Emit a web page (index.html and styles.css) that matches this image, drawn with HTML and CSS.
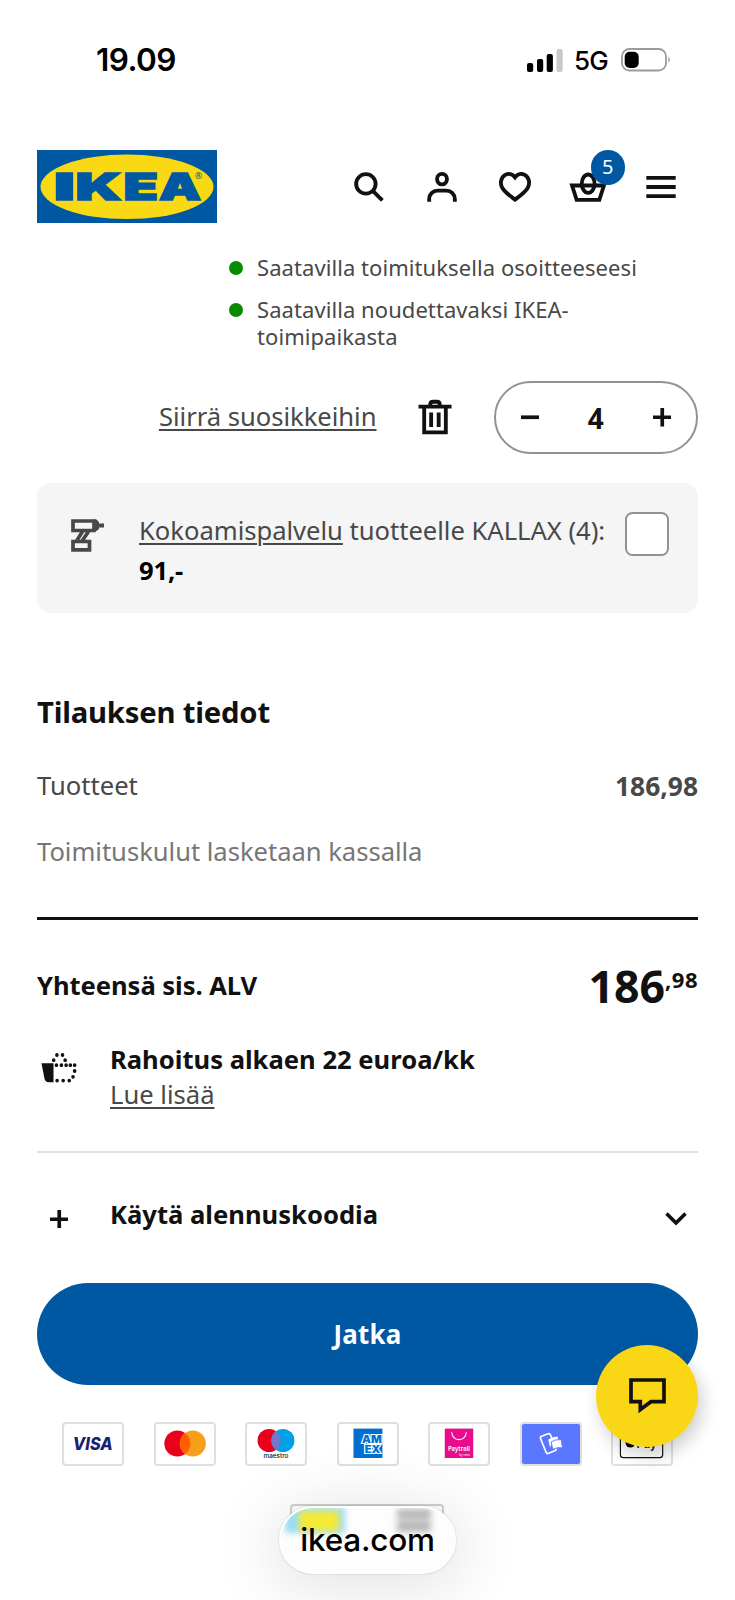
FILE: index.html
```html
<!DOCTYPE html>
<html lang="fi">
<head>
<meta charset="utf-8">
<title>IKEA – Ostoskori</title>
<link rel="stylesheet" href="styles.css">
</head>
<body>
<div class="screen">
  <div class="status">
    <span class="clock">19.09</span>
    <div class="status-right">
      <svg class="signal" viewBox="0 0 36 23"><rect x="0" y="14" width="6.2" height="9" rx="2"/><rect x="10" y="10" width="6.2" height="13" rx="2"/><rect x="19.700" y="5" width="6.200" height="18" rx="2"/><rect x="29.500" y="0" width="6.200" height="23" rx="2" fill="#c9c9c9"/></svg>
      <span class="network">5G</span>
      <svg class="battery" viewBox="0 0 50 24"><rect x="1" y="1" width="44" height="21.500" rx="7.500" fill="none" stroke="#9b9b9b" stroke-width="1.800"/><rect x="3.700" y="3.700" width="14" height="16.200" rx="5"/><path d="M47.500 8.500q2.500 3.200 0 6.400z" fill="#888"/></svg>
    </div>
  </div>

  <header class="header">
    <svg class="logo" viewBox="0 0 180 73">
      <rect width="180" height="73" fill="#0058a3"/>
      <ellipse cx="90" cy="36.800" rx="86.500" ry="32.300" fill="#f9d914"/>
      <g class="logo-letters">
        <text x="17" y="49.600" textLength="21" lengthAdjust="spacingAndGlyphs">I</text>
        <text x="38.500" y="49.600" textLength="46" lengthAdjust="spacingAndGlyphs">K</text>
        <text x="86.500" y="49.600" textLength="34.500" lengthAdjust="spacingAndGlyphs">E</text>
        <text x="122" y="49.600" textLength="42" lengthAdjust="spacingAndGlyphs">A</text>
      </g>
      <text class="logo-mark" x="157.800" y="28.600">®</text>
    </svg>
    <nav class="nav">
      <svg class="icon" viewBox="0 0 24 24"><circle cx="10.300" cy="10.300" r="5.300"/><path d="M14.200 14.200l5.100 5.100"/></svg>
      <svg class="icon" viewBox="0 0 24 24"><ellipse cx="12" cy="7.700" rx="2.700" ry="2.900"/><path d="M5 20v-1.500A4.500 4.500 0 0 1 9.500 14h5a4.500 4.500 0 0 1 4.500 4.500V20"/></svg>
      <svg class="icon" viewBox="0 0 24 24"><path d="M12 6.700C10.600 4.800 8.500 4.400 6.700 5.400 4.100 6.900 3.700 10.100 5.100 12.500 6.600 15 9.300 16.800 12 18.900 14.700 16.800 17.400 15 18.900 12.500 20.300 10.100 19.900 6.900 17.300 5.400 15.500 4.400 13.400 4.800 12 6.700z"/></svg>
      <div class="basket">
        <svg class="icon" viewBox="0 0 24 24"><path d="M3.300 11.200h17.400L18.200 19H5.800z"/><ellipse cx="12.100" cy="10.200" rx="3.500" ry="5"/></svg>
        <span class="badge">5</span>
      </div>
      <svg class="icon" viewBox="0 0 24 24"><path d="M4 7h16M4 12h16M4 17h16"/></svg>
    </nav>
  </header>

  <main class="content">
    <ul class="availability">
      <li>Saatavilla toimituksella osoitteeseesi</li>
      <li>Saatavilla noudettavaksi IKEA-<br>toimipaikasta</li>
    </ul>

    <div class="item-actions">
      <a class="link">Siirrä suosikkeihin</a>
      <svg class="icon trash" viewBox="0 0 24 24"><path d="M3 6.300h18M6.100 6.300v14.100h11.800V6.300M9.400 6.300V5.200q0-1.500 1.500-1.500h2.200q1.500 0 1.500 1.500v1.100M9.900 9.500v8M14 9.500v8"/></svg>
      <div class="stepper">
        <svg class="sign" viewBox="0 0 18 18"><path d="M0 9h18"/></svg>
        <span>4</span>
        <svg class="sign" viewBox="0 0 18 18"><path d="M0 9h18M9 0v18"/></svg>
      </div>
    </div>

    <section class="service">
      <svg class="drill" viewBox="0 0 34 33"><path d="M2 2h21v9.500H2zM2 22.500h16.500v8.300H2zM11.500 12.500L5.500 22M17.500 12.500L11 22"/><path class="solid" d="M23 0.500h2.500l2.500 2.500v1.500h5v4h-5V10l-2.500 2H23z"/></svg>
      <div class="service-text"><a class="link">Kokoamispalvelu</a> tuotteelle KALLAX (4):<br><strong>91,-</strong></div>
      <span class="checkbox"></span>
    </section>

    <h2 class="title">Tilauksen tiedot</h2>
    <div class="row products"><span>Tuotteet</span><strong>186,98</strong></div>
    <p class="shipping">Toimituskulut lasketaan kassalla</p>
    <div class="rule-strong"></div>
    <div class="row total"><strong>Yhteensä sis. ALV</strong><span class="price">186<sup>,98</sup></span></div>

    <div class="financing">
      <svg class="finance-icon" viewBox="0 0 38 30" preserveAspectRatio="none"><path d="M0.500 10.200h12.700v19H8.500q-4.300 0-5-4.500z"/><g class="dots"><path d="M16.800 2h.01M22.700 2h.01M13.400 7.200h.01M25.500 7.200h.01M16.300 12.200h.01M21.500 12.200h.01M26.500 12.200h.01M31 12.200h.01M35.500 12.200h.01M35.500 18h.01M33.800 23.800h.01M29.800 27.600h.01M17 27.600h.01M23.400 27.600h.01"/></g></svg>
      <div><strong>Rahoitus alkaen 22 euroa/kk</strong><br><a class="link">Lue lisää</a></div>
    </div>
    <div class="rule-light"></div>
    <div class="discount">
      <svg class="sign" viewBox="0 0 18 18"><path d="M0 9h18M9 0v18"/></svg>
      <strong>Käytä alennuskoodia</strong>
      <svg class="chevron" viewBox="0 0 22 14"><path d="M1.500 1.500L11 11l9.500-9.500"/></svg>
    </div>
    <button class="continue">Jatka</button>

    <div class="payments">
      <div class="card"><svg viewBox="0 0 61 43"><text class="visa" x="8.500" y="28.200" textLength="43.500" lengthAdjust="spacingAndGlyphs">VISA</text></svg></div>
      <div class="card"><svg viewBox="0 0 61 43"><circle cx="22.200" cy="21.300" r="14.200" fill="#eb001b"/><circle cx="39" cy="21.300" r="14.200" fill="#f79e1b"/><path d="M30.600 9.850a14.200 14.200 0 0 1 0 22.900 14.200 14.200 0 0 1 0-22.900z" fill="#ff5f00"/></svg></div>
      <div class="card"><svg viewBox="0 0 61 43"><circle cx="23" cy="18" r="12.600" fill="#eb001b"/><circle cx="38" cy="18" r="12.600" fill="#00a2e5"/><path d="M30.500 7.900a12.600 12.600 0 0 1 0 20.200 12.600 12.600 0 0 1 0-20.200z" fill="#7375cf"/><text class="maestro" x="17" y="37" textLength="27" lengthAdjust="spacingAndGlyphs">maestro</text></svg></div>
      <div class="card"><svg viewBox="0 0 61 43"><rect x="14.700" y="5" width="31.500" height="32" fill="#016fd0"/><text class="amex" x="24" y="20.600" textLength="21.500" lengthAdjust="spacingAndGlyphs">AM</text><text class="amex" x="27" y="31.500" textLength="17" lengthAdjust="spacingAndGlyphs">EX</text></svg></div>
      <div class="card"><svg viewBox="0 0 61 43"><rect x="15" y="5" width="31" height="32" fill="#ea0b8c"/><path d="M22.500 9q1 8 8 8t8-8" fill="none" stroke="#fff" stroke-width="1.200"/><text class="paytrail" x="18.500" y="29.500" textLength="24" lengthAdjust="spacingAndGlyphs">Paytrail</text><text class="paytrail-sub" x="30.500" y="34.500" textLength="12" lengthAdjust="spacingAndGlyphs">by nets</text></svg></div>
      <div class="card mobilepay"><svg viewBox="0 0 61 43"><g transform="rotate(-22 27 22)"><rect x="22" y="11.500" width="11.500" height="20" rx="2" fill="none" stroke="#fff" stroke-width="1.800"/></g><path d="M27.500 17q5-3.500 10-3.500l1 4q-5 1.500-7.500 4l-1.500 4z" fill="#fff"/><path d="M30.500 19.500q4.500-3 11-2.500l1.500 9q-5.500-1-10.500 1.500z" fill="#fff" stroke="#5a78ff" stroke-width="1"/></svg></div>
      <div class="card"><svg viewBox="0 0 61 43"><rect x="7" y="6" width="46" height="30.500" rx="3" fill="#fff" stroke="#111" stroke-width="1.300"/><circle cx="17.800" cy="20.500" r="5.200"/><text class="applepay" x="24.500" y="26" textLength="22" lengthAdjust="spacingAndGlyphs">Pay</text></svg></div>
    </div>
    <div class="next-row"></div>
  </main>

  <div class="chat"><svg viewBox="0 0 37 36"><path d="M2 2h33v21.700H22L11.300 31.500v-7.800H2z"/></svg></div>
  <div class="address"><span class="blob blob-blue"></span><span class="blob blob-yellow"></span><span class="blob blob-grey"></span><span class="domain">ikea.com</span></div>
</div>
</body>
</html>
```
FILE: styles.css
```css
* { box-sizing: border-box; }
body {
  margin: 0;
  background: #fff;
  color: #484848;
  font: 25.600px/40px "Noto Sans", sans-serif;
}
.screen {
  position: relative;
  width: 735px;
  height: 1600px;
  overflow: hidden;
  background: #fff;
}
strong { color: #111; font-weight: 700; }
.link { text-decoration: underline; text-decoration-thickness: 1.800px; text-underline-offset: 2.500px; }

.status {
  display: flex;
  justify-content: space-between;
  align-items: center;
  height: 120px;
  padding: 0 64.500px 0 96px;
  color: #000;
  font-family: Inter, sans-serif;
}
.clock { font-size: 31.500px; font-weight: 600; letter-spacing: -0.600px; }
.status-right { display: flex; align-items: center; }
.signal { width: 36px; height: 23px; }
.network { margin: 2px 12.500px 0 11px; font-size: 26px; font-weight: 500; letter-spacing: -0.700px; }
.battery { width: 50px; height: 24px; }

.header {
  display: flex;
  justify-content: space-between;
  align-items: center;
  height: 73px;
  margin-top: 30px;
  padding: 0 52px 0 37px;
}
.logo { width: 180px; height: 73px; }
.logo-letters {
  font: 900 37px Inter, sans-serif;
  fill: #0058a3;
  stroke: #0058a3;
  stroke-width: 1.600px;
}
.logo-mark { font: 9px "Noto Sans", sans-serif; fill: #0058a3; }
.nav { display: flex; gap: 29px; }
.icon {
  display: block;
  width: 44px;
  height: 44px;
  fill: none;
  stroke: #111;
  stroke-width: 2.100;
}
.basket { position: relative; }
.badge {
  position: absolute;
  left: 24.500px;
  top: -14.500px;
  width: 34.500px;
  height: 34.500px;
  border-radius: 50%;
  background: #0058a3;
  color: #fff;
  font-size: 20px;
  line-height: 34px;
  text-align: center;
}

.content { padding: 0 37px; }
.availability {
  display: grid;
  gap: 14.700px;
  margin: 30.500px 0 0;
  padding: 0 0 0 191.500px;
  list-style: none;
  font-size: 22px;
  line-height: 27.600px;
  letter-spacing: 0.070px;
}
.availability li { display: grid; grid-template-columns: 14.500px 1fr; gap: 14px; }
.availability li::before {
  content: "";
  width: 14.500px;
  height: 14.500px;
  margin-top: 7px;
  border-radius: 50%;
  background: #0a8a00;
}

.item-actions {
  display: flex;
  justify-content: flex-end;
  align-items: center;
  height: 73px;
  margin-top: 30px;
}
.item-actions .link { letter-spacing: -0.020px; }
.trash { margin: 0 37px 0 36px; }
.stepper {
  display: flex;
  justify-content: space-between;
  align-items: center;
  width: 204.500px;
  height: 73px;
  padding: 0 25px;
  border: 2px solid #929292;
  border-radius: 37px;
  color: #111;
  font-size: 28px;
  font-weight: 700;
}
.stepper span { padding-top: 2px; }
.sign { width: 18.500px; height: 18.500px; stroke: #111; stroke-width: 3.600; fill: none; }

.service {
  display: flex;
  height: 130px;
  margin-top: 29px;
  padding: 28px 29px 0 34px;
  border-radius: 14px;
  background: #f5f5f5;
}
.service strong { color: #000; letter-spacing: -0.200px; }
.drill { flex: none; width: 34px; height: 33px; margin: 8px 34px 0 0; fill: none; stroke: #484848; stroke-width: 3.700; }
.drill .solid { fill: #484848; stroke: none; }
.service-text { flex: 1; white-space: nowrap; letter-spacing: -0.020px; }
.checkbox {
  width: 44px;
  height: 44px;
  margin-top: 1px;
  border: 2px solid #929292;
  border-radius: 7.500px;
  background: #fff;
}

.title {
  margin: 77.500px 0 0;
  color: #111;
  font-size: 29.250px;
  line-height: 44px;
  letter-spacing: -0.200px;
}
.row { display: flex; justify-content: space-between; }
.products { margin-top: 31.500px; }
.products strong { color: #484848; padding-top: 0.400px; font-size: 26.400px; }
.shipping { margin: 26px 0 0; color: #767676; letter-spacing: -0.030px; }
.rule-strong { height: 3.700px; margin-top: 44.200px; background: #111; }
.total { height: 60px; margin-top: 35.500px; line-height: 60px; }
.price { display: flex; color: #111; font-size: 44.600px; font-weight: 700; }
.price sup { font-size: 22px; font-weight: 700; line-height: 30px; padding-top: 8px; letter-spacing: 0.500px; }
.total strong { letter-spacing: -0.060px; }

.financing {
  display: flex;
  margin-top: 27.300px;
  line-height: 34.700px;
}
.finance-icon { width: 36px; height: 30px; margin: 10px 33px 0 4px; fill: #111; }
.dots { fill: none; stroke: #111; stroke-width: 3.800; stroke-linecap: round; }
.rule-light { height: 1.800px; margin-top: 38.500px; background: #dfdfdf; }
.discount {
  display: flex;
  align-items: center;
  margin-top: 42px;
  padding: 0 11px 0 12.500px;
}
.discount strong { margin-left: 42px; }
.discount .sign { margin-top: 9px; }
.chevron { width: 22px; height: 14px; margin: 9px 0 0 auto; fill: none; stroke: #111; stroke-width: 3.700; }
.continue {
  display: block;
  width: 661px;
  height: 102.500px;
  margin-top: 48.200px;
  padding: 0 0 1px;
  border: 0;
  border-radius: 52px;
  background: #0058a3;
  color: #fff;
  font: 700 25.900px "Noto Sans", sans-serif;
  letter-spacing: 0.250px;
}

.payments {
  display: flex;
  gap: 29.500px;
  margin: 37px 0 0 25.300px;
}
.card {
  flex: none;
  width: 62px;
  height: 43.500px;
  border: 2px solid #dfdfdf;
  border-radius: 4px;
  overflow: hidden;
  background: #fff;
}
.card svg { display: block; width: 100%; height: 100%; }
.mobilepay { background: #5a78ff; }
.visa { font: italic 800 19px Inter, sans-serif; fill: #1a1f71; }
.maestro { font: 500 7px Inter, sans-serif; fill: #111; }
.amex { font: 900 11px/1 Inter, sans-serif; fill: #016fd0; stroke: #fff; stroke-width: 2.400px; paint-order: stroke; }
.paytrail { font: 600 7.500px "Noto Sans", sans-serif; fill: #fff; }
.paytrail-sub { font: 4px "Noto Sans", sans-serif; fill: #fff; }
.applepay { font: 600 15px Inter, sans-serif; fill: #111; }
.next-row {
  width: 154px;
  height: 44px;
  margin: 38.500px 0 0 253px;
  border: 2px solid #d0d0d0;
  border-radius: 4px;
}

.chat {
  position: absolute;
  left: 596px;
  top: 1345px;
  display: grid;
  place-items: center;
  width: 102px;
  height: 102px;
  border-radius: 50%;
  background: #f9d716;
  box-shadow: 4px 8px 18px rgba(0, 0, 0, 0.2);
}
.chat svg { width: 37px; height: 36px; fill: none; stroke: #111; stroke-width: 3.700; }
.address {
  position: absolute;
  left: 279px;
  top: 1506px;
  display: grid;
  place-items: center;
  width: 177px;
  height: 68px;
  border: 2px solid #fff;
  border-radius: 34px;
  overflow: hidden;
  background: #fdfdfd;
  box-shadow: 0 0 2px rgba(0, 0, 0, 0.2), 0 8px 60px 10px rgba(0, 0, 0, 0.1);
}
.domain {
  position: relative;
  color: #000;
  font: 500 31.500px/64px Inter, sans-serif;
  letter-spacing: -0.250px;
}
.blob { position: absolute; filter: blur(3px); }
.blob-blue { left: 4px; top: -1px; width: 60px; height: 26px; background: #9bdcf5; }
.blob-yellow { left: 18px; top: 3px; width: 40px; height: 20px; background: #f6ea35; }
.blob-grey { left: 116px; top: 1px; width: 34px; height: 24px; background: repeating-linear-gradient(#b5b5b5 0 9px, #ddd 9px 13px); }
```
